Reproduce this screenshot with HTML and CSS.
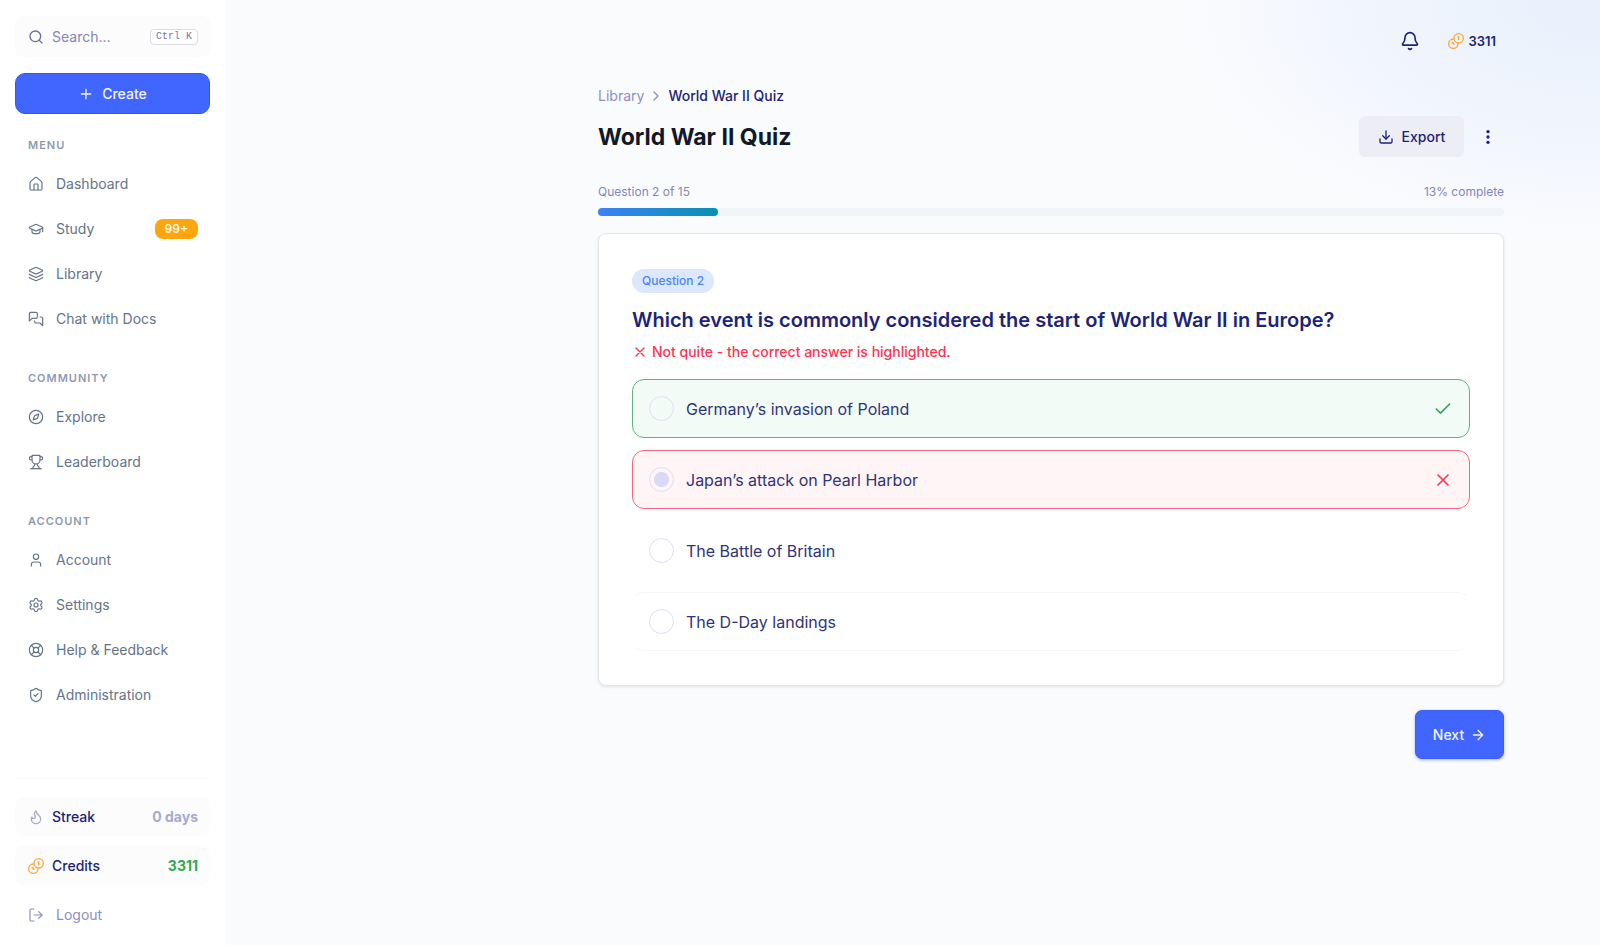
FILE: index.html
```
<!DOCTYPE html>
<html lang="en">
<head>
  <meta charset="UTF-8" />
  <meta name="viewport" content="width=device-width, initial-scale=1.0"/>
  <title>World War II Quiz</title>
  <link rel="stylesheet" href="styles.css">
</head>
<body>

<!-- SIDEBAR -->
<aside class="sidebar">
  <label class="search">
    <svg class="icon" viewBox="0 0 24 24"><circle cx="11" cy="11" r="8"/><path d="m21 21-4.3-4.3"/></svg>
    <input type="text" placeholder="Search..." aria-label="Search" />
    <kbd>Ctrl K</kbd>
  </label>

  <button class="create">
    <svg class="icon" viewBox="0 0 24 24"><path d="M5 12h14M12 5v14"/></svg>
    Create
  </button>

  <nav>
    <h2>Menu</h2>
    <a href="#">
      <svg class="icon" viewBox="0 0 24 24"><path d="M15 21v-8a1 1 0 0 0-1-1h-4a1 1 0 0 0-1 1v8"/><path d="M3 10a2 2 0 0 1 .709-1.528l7-6a2 2 0 0 1 2.582 0l7 6A2 2 0 0 1 21 10v9a2 2 0 0 1-2 2H5a2 2 0 0 1-2-2z"/></svg>
      Dashboard
    </a>
    <a href="#">
      <svg class="icon" viewBox="0 0 24 24"><path d="M21.42 10.922a1 1 0 0 0-.019-1.838L12.83 5.18a2 2 0 0 0-1.66 0L2.6 9.08a1 1 0 0 0 0 1.832l8.57 3.908a2 2 0 0 0 1.66 0z"/><path d="M22 10v6"/><path d="M6 12.5V16a6 3 0 0 0 12 0v-3.5"/></svg>
      Study
      <span class="count">99+</span>
    </a>
    <a href="#">
      <svg class="icon" viewBox="0 0 24 24"><path d="M12.83 2.18a2 2 0 0 0-1.66 0L2.6 6.08a1 1 0 0 0 0 1.83l8.58 3.91a2 2 0 0 0 1.66 0l8.58-3.9a1 1 0 0 0 0-1.83z"/><path d="M2 12a1 1 0 0 0 .58.91l8.6 3.91a2 2 0 0 0 1.65 0l8.58-3.9A1 1 0 0 0 22 12"/><path d="M2 17a1 1 0 0 0 .58.91l8.6 3.91a2 2 0 0 0 1.65 0l8.58-3.9A1 1 0 0 0 22 17"/></svg>
      Library
    </a>
    <a href="#">
      <svg class="icon" viewBox="0 0 24 24"><path d="M14 9a2 2 0 0 1-2 2H6l-4 4V4a2 2 0 0 1 2-2h8a2 2 0 0 1 2 2z"/><path d="M18 9h2a2 2 0 0 1 2 2v11l-4-4h-6a2 2 0 0 1-2-2v-1"/></svg>
      Chat with Docs
    </a>
  </nav>

  <nav>
    <h2>Community</h2>
    <a href="#">
      <svg class="icon" viewBox="0 0 24 24"><circle cx="12" cy="12" r="10"/><path d="m16.24 7.76-1.804 5.411a2 2 0 0 1-1.265 1.265L7.76 16.24l1.804-5.411a2 2 0 0 1 1.265-1.265z"/></svg>
      Explore
    </a>
    <a href="#">
      <svg class="icon" viewBox="0 0 24 24"><path d="M10 14.66v1.626a2 2 0 0 1-.976 1.696A5 5 0 0 0 7 21.978"/><path d="M14 14.66v1.626a2 2 0 0 0 .976 1.696A5 5 0 0 1 17 21.978"/><path d="M18 9h1.5a1 1 0 0 0 0-5H18"/><path d="M4 22h16"/><path d="M6 9a6 6 0 0 0 12 0V3a1 1 0 0 0-1-1H7a1 1 0 0 0-1 1z"/><path d="M6 9H4.5a1 1 0 0 1 0-5H6"/></svg>
      Leaderboard
    </a>
  </nav>

  <nav>
    <h2>Account</h2>
    <a href="#">
      <svg class="icon" viewBox="0 0 24 24"><path d="M19 21v-2a4 4 0 0 0-4-4H9a4 4 0 0 0-4 4v2"/><circle cx="12" cy="7" r="4"/></svg>
      Account
    </a>
    <a href="#">
      <svg class="icon" viewBox="0 0 24 24"><path d="M9.671 4.136a2.34 2.34 0 0 1 4.659 0 2.34 2.34 0 0 0 3.319 1.915 2.34 2.34 0 0 1 2.33 4.033 2.34 2.34 0 0 0 0 3.831 2.34 2.34 0 0 1-2.33 4.033 2.34 2.34 0 0 0-3.319 1.915 2.34 2.34 0 0 1-4.659 0 2.34 2.34 0 0 0-3.32-1.915 2.34 2.34 0 0 1-2.33-4.033 2.34 2.34 0 0 0 0-3.831A2.34 2.34 0 0 1 6.35 6.051a2.34 2.34 0 0 0 3.319-1.915"/><circle cx="12" cy="12" r="3"/></svg>
      Settings
    </a>
    <a href="#">
      <svg class="icon" viewBox="0 0 24 24"><circle cx="12" cy="12" r="10"/><path d="m4.93 4.93 4.24 4.24M14.83 9.17l4.24-4.24M14.83 14.83l4.24 4.24M9.17 14.83l-4.24 4.24"/><circle cx="12" cy="12" r="4"/></svg>
      Help &amp; Feedback
    </a>
    <a href="#">
      <svg class="icon" viewBox="0 0 24 24"><path d="M20 13c0 5-3.5 7.5-7.66 8.95a1 1 0 0 1-.67-.01C7.5 20.5 4 18 4 13V6a1 1 0 0 1 1-1c2 0 4.5-1.2 6.24-2.72a1.17 1.17 0 0 1 1.52 0C14.51 3.81 17 5 19 5a1 1 0 0 1 1 1z"/><path d="m9 12 2 2 4-4"/></svg>
      Administration
    </a>
  </nav>

  <div class="sidebar-bottom">
    <div class="stat streak">
      <svg class="icon" viewBox="0 0 24 24"><path d="M12 3q1 4 4 6.5t3 5.5a1 1 0 0 1-14 0 5 5 0 0 1 1-3 1 1 0 0 0 5 0c0-2-1.5-3-1.5-5q0-2 2.5-4"/></svg>
      <span>Streak</span>
      <strong>0 days</strong>
    </div>
    <div class="stat credits">
      <svg class="icon coins" viewBox="0 0 24 24"><circle cx="16" cy="8" r="7"/><path d="M8 9a7 7 0 1 0 7 7"/><path d="M15 6h1v4"/><path d="m6 15 1-1 2 3"/></svg>
      <span>Credits</span>
      <strong>3311</strong>
    </div>
    <a class="logout" href="#">
      <svg class="icon" viewBox="0 0 24 24"><path d="m16 17 5-5-5-5"/><path d="M21 12H9"/><path d="M9 21H5a2 2 0 0 1-2-2V5a2 2 0 0 1 2-2h4"/></svg>
      Logout
    </a>
  </div>
</aside>

<!-- QUIZ -->
<main>
  <div class="content">
    <header class="topbar">
      <button class="bell" aria-label="Notifications">
        <svg class="icon" viewBox="0 0 24 24"><path d="M10.268 21a2 2 0 0 0 3.464 0"/><path d="M3.262 15.326A1 1 0 0 0 4 17h16a1 1 0 0 0 .74-1.673C19.41 13.956 18 12.499 18 8A6 6 0 0 0 6 8c0 4.499-1.411 5.956-2.738 7.326"/></svg>
      </button>
      <span class="balance">
        <svg class="icon coins" viewBox="0 0 24 24"><circle cx="16" cy="8" r="7"/><path d="M8 9a7 7 0 1 0 7 7"/><path d="M15 6h1v4"/><path d="m6 15 1-1 2 3"/></svg>
        3311
      </span>
    </header>

    <div class="breadcrumb">
      <a href="#">Library</a>
      <svg class="icon" viewBox="0 0 24 24"><path d="m9 18 6-6-6-6"/></svg>
      <span>World War II Quiz</span>
    </div>

    <div class="title-row">
      <h1>World War II Quiz</h1>
      <button class="export">
        <svg class="icon" viewBox="0 0 24 24"><path d="M12 15V3"/><path d="M21 15v4a2 2 0 0 1-2 2H5a2 2 0 0 1-2-2v-4"/><path d="m7 10 5 5 5-5"/></svg>
        Export
      </button>
      <button class="more" aria-label="More options">
        <svg viewBox="0 0 24 24"><circle cx="12" cy="4" r="2.5"/><circle cx="12" cy="12" r="2.5"/><circle cx="12" cy="20" r="2.5"/></svg>
      </button>
    </div>

    <div class="progress-text">
      <span>Question 2 of 15</span>
      <span>13% complete</span>
    </div>
    <div class="progress"><div class="progress-bar" style="width: 13.3%"></div></div>

    <section class="card">
      <span class="badge">Question 2</span>
      <h2>Which event is commonly considered the start of World War II in Europe?</h2>
      <p class="feedback">
        <svg class="icon" viewBox="0 0 24 24"><path d="M18 6 6 18M6 6l12 12"/></svg>
        Not quite - the correct answer is highlighted.
      </p>

      <div class="options">
        <label class="option correct">
          <input type="radio" name="answer" disabled />
          <span>Germany’s invasion of Poland</span>
          <svg class="icon" viewBox="0 0 24 24"><path d="M20 6 9 17l-5-5"/></svg>
        </label>
        <label class="option wrong">
          <input type="radio" name="answer" checked disabled />
          <span>Japan’s attack on Pearl Harbor</span>
          <svg class="icon" viewBox="0 0 24 24"><path d="M18 6 6 18M6 6l12 12"/></svg>
        </label>
        <label class="option">
          <input type="radio" name="answer" disabled />
          <span>The Battle of Britain</span>
        </label>
        <label class="option last">
          <input type="radio" name="answer" disabled />
          <span>The D-Day landings</span>
        </label>
      </div>
    </section>

    <div class="actions">
      <button class="next">
        Next
        <svg class="icon" viewBox="0 0 24 24"><path d="M5 12h14M12 5l7 7-7 7"/></svg>
      </button>
    </div>
  </div>
</main>

</body>
</html>
```
FILE: styles.css
```
* {
  box-sizing: border-box;
}
body {
  font-family: Inter, "Liberation Sans", sans-serif;
  font-size: 14px;
  line-height: 20px;
  color: #1d2478;
  background: #fafbfd;
  margin: 0;
  display: flex;
  min-height: 100vh;
}
h1, h2, p {
  margin: 0;
}
a {
  color: inherit;
  text-decoration: none;
}
button {
  font: inherit;
  color: inherit;
  border: none;
  background: none;
  padding: 0;
  cursor: pointer;
  display: flex;
  align-items: center;
  justify-content: center;
}
.icon {
  width: 16px;
  height: 16px;
  flex: none;
  fill: none;
  stroke: currentColor;
  stroke-width: 2;
  stroke-linecap: round;
  stroke-linejoin: round;
}
.icon.coins {
  color: #fca63a;
}

/* Sidebar */
.sidebar {
  width: 226px;
  flex: none;
  background: white;
  padding: 16px 16px 16px 15px;
  display: flex;
  flex-direction: column;
}
.search {
  display: flex;
  align-items: center;
  gap: 8px;
  height: 41px;
  padding: 0 12px 0 13px;
  border-radius: 8px;
  background: #fcfcfc;
  color: #6c6ca4;
}
.search input {
  flex: 1;
  min-width: 0;
  border: none;
  outline: none;
  padding: 0;
  background: none;
  font: inherit;
  color: inherit;
}
.search input::placeholder {
  color: #8585b5;
  opacity: 1;
}
.search kbd {
  font-family: "Liberation Mono", monospace;
  font-size: 10px;
  line-height: 14px;
  padding: 0 5px;
  border: 1px solid #dcdce4;
  border-radius: 4px;
  background: white;
  color: #77779f;
}
.create {
  height: 41px;
  margin: 16px 0 23px;
  gap: 8px;
  border: 1px solid #2f55fa;
  border-radius: 10px;
  background: #4166ff;
  color: #f0f3ff;
  font-weight: 500;
}
nav {
  display: flex;
  flex-direction: column;
  gap: 4px;
  margin-bottom: 31px;
}
nav h2 {
  font-size: 11px;
  line-height: 16px;
  font-weight: 600;
  letter-spacing: 1px;
  text-transform: uppercase;
  color: #8d9ab3;
  padding: 0 13px;
  margin-bottom: 6px;
}
nav a, .logout {
  display: flex;
  align-items: center;
  gap: 12px;
  height: 41px;
  padding: 0 12px 0 13px;
  color: #64748b;
}
nav .icon, .logout .icon {
  stroke-width: 1.75;
}
.count {
  margin-left: auto;
  padding: 0 10px;
  border-radius: 8px;
  background: #ffa50f;
  color: #fff6e0;
  font-size: 12px;
  font-weight: 600;
}
.sidebar-bottom {
  margin-top: auto;
  padding-top: 18px;
  border-top: 1px solid #fbfbfc;
  display: flex;
  flex-direction: column;
  gap: 10px;
}
.stat {
  display: flex;
  align-items: center;
  gap: 8px;
  height: 39px;
  padding: 0 12px 0 13px;
  border-radius: 8px;
  background: #fcfcfc;
  font-weight: 500;
}
.stat strong {
  margin-left: auto;
  font-weight: 700;
}
.streak .icon, .streak strong {
  color: #a6abcd;
}
.credits strong {
  color: #32a852;
}
.logout {
  height: 29px;
  color: #8c8fc0;
  margin-top: 5px;
}

/* Main column */
main {
  flex: 1;
  padding: 0 96px 40px;
  background: radial-gradient(ellipse 420px 240px at 100% 0, #e8f1fc 10%, #f1f5fd 55%, transparent);
}
.content {
  max-width: 906px;
  margin-left: auto;
}
.topbar {
  display: flex;
  align-items: center;
  justify-content: flex-end;
  gap: 28px;
  height: 81px;
  padding-right: 8px;
}
.bell .icon {
  width: 20px;
  height: 20px;
}
.balance {
  display: flex;
  align-items: center;
  gap: 4px;
  font-size: 13px;
  font-weight: 600;
}
.breadcrumb {
  display: flex;
  align-items: center;
  gap: 4px;
  height: 30px;
  font-weight: 500;
}
.breadcrumb a, .breadcrumb .icon {
  color: #8e90c2;
  font-weight: 400;
}
.title-row {
  display: flex;
  align-items: center;
  margin: 5px 0 25px;
}
h1 {
  margin-right: auto;
  font-size: 23px;
  line-height: 32px;
  font-weight: 700;
  color: #111827;
}
.export {
  width: 105px;
  height: 41px;
  gap: 8px;
  border-radius: 6px;
  background: #ededf6;
  font-weight: 500;
}
.more {
  width: 32px;
  height: 32px;
  margin-left: 8px;
}
.more svg {
  width: 16px;
  height: 16px;
  fill: #1d1f8c;
}
.progress-text {
  display: flex;
  justify-content: space-between;
  font-size: 12px;
  color: #8487bd;
}
.progress {
  height: 8px;
  margin: 6px 0 17px;
  border-radius: 4px;
  background: #f1f4f9;
}
.progress-bar {
  height: 100%;
  border-radius: 4px;
  background: linear-gradient(to right, #3b82f6, #0891b2);
}
.card {
  padding: 35px 33px 34px;
  border: 1px solid #e3e6ee;
  border-radius: 8px;
  background: white;
  box-shadow: 0 1px 3px rgba(0, 0, 0, 0.1);
}
.badge {
  display: inline-block;
  padding: 2px 10px;
  border-radius: 12px;
  background: #dbe8ff;
  color: #4a86f7;
  font-size: 12px;
  font-weight: 500;
}
.card h2 {
  margin-top: 12px;
  font-size: 20px;
  line-height: 30px;
  font-weight: 600;
}
.feedback {
  display: flex;
  align-items: center;
  gap: 4px;
  margin: 7px 0 17px;
  color: #ff3352;
  font-weight: 500;
}
.options {
  display: flex;
  flex-direction: column;
  gap: 12px;
}
.option {
  display: flex;
  align-items: center;
  gap: 12px;
  height: 59px;
  padding: 0 16px;
  border: 1px solid transparent;
  border-radius: 12px;
  font-size: 16px;
  color: #2f3579;
}
.option .icon {
  width: 20px;
  height: 20px;
  margin-left: auto;
}
.option.correct {
  border-color: #63b37d;
  background: #f3fbf6;
}
.option.correct .icon {
  color: #37a558;
}
.option.wrong {
  border-color: #f5677f;
  background: #fff4f6;
}
.option.wrong .icon {
  color: #ff3352;
}
.option.last {
  border-top-color: #f6f6fa;
  border-bottom-color: #f6f6fa;
}
.option input {
  appearance: none;
  width: 25px;
  height: 25px;
  flex: none;
  margin: 0;
  border: 1px solid #dedef8;
  border-radius: 50%;
}
.option input:checked {
  background: radial-gradient(circle, #dadaf8 7px, transparent 8px);
}
.actions {
  display: flex;
  justify-content: flex-end;
  margin-top: 24px;
}
.next {
  width: 89px;
  height: 49px;
  gap: 6px;
  border: 1px solid #3b5ffa;
  border-radius: 7px;
  background: #4166ff;
  color: #f0f3ff;
  font-weight: 500;
  box-shadow: 0 1px 3px rgba(65, 102, 255, 0.5);
}
```
